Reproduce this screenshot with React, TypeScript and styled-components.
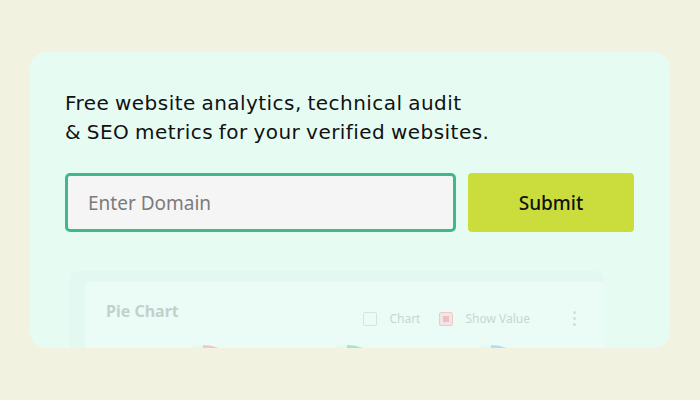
import React from "react";
import styled, { createGlobalStyle } from "styled-components";

const Global = createGlobalStyle`
  html, body { margin: 0; padding: 0; background: #f2f2e1; }
  body { font-family: "Noto Sans", "Liberation Sans", sans-serif; }
`;

const Page = styled.div`
  width: 700px;
  height: 400px;
  padding: 52px 30px;
  box-sizing: border-box;
`;

const Card = styled.div`
  height: 296px;
  background: #e6fcf3;
  border-radius: 16px;
  padding: 37px 36px 0 35px;
  box-sizing: border-box;
  overflow: hidden;
  display: flex;
  flex-direction: column;
`;

const Headline = styled.p`
  margin: 0;
  font-family: "DejaVu Sans", "Noto Sans", sans-serif;
  font-size: 20px;
  line-height: 29px;
  color: #111;
  letter-spacing: 0.45px;
  word-spacing: -1px;
`;

const Form = styled.div`
  display: flex;
  gap: 12px;
  margin-top: 26px;
`;

const DomainInput = styled.input`
  flex: 0 0 391px;
  height: 59px;
  box-sizing: border-box;
  border: 3px solid #3fb98c;
  border-radius: 5px;
  background: #f5f5f5;
  padding: 0 0 0 20px;
  font-family: inherit;
  font-size: 19px;
  color: #222;
  outline: none;
  &::placeholder { color: #7b7b7b; }
`;

const SubmitButton = styled.button`
  flex: 0 0 166px;
  height: 59px;
  border: none;
  border-radius: 4px;
  background: #cadd3c;
  font-family: inherit;
  font-size: 19px;
  font-weight: 500;
  color: #111;
  cursor: pointer;
`;

const ChartArea = styled.div`
  margin-top: 39px;
  margin-left: 5px;
  margin-right: 30px;
  padding: 11px 0 0 15px;
  background: #e3f8f1;
  border-radius: 8px 8px 0 0;
  flex: 1;
  display: flex;
  flex-direction: column;
`;

const ChartPanel = styled.div`
  flex: 1;
  background: #ebfcf6;
  border-radius: 4px 4px 0 0;
  padding: 18px 28px 0 21px;
  display: flex;
  flex-direction: column;
`;

const ChartHeader = styled.div`
  display: flex;
  align-items: flex-start;
`;

const ChartTitle = styled.span`
  font-size: 16px;
  line-height: 22px;
  font-weight: 700;
  color: #c2d1cc;
  flex: 1;
`;

const Toggle = styled.span`
  display: flex;
  align-items: center;
  gap: 12px;
  margin-right: 19px;
  font-size: 12px;
  line-height: 16px;
  color: #c6d6d1;
  padding-top: 11px;
`;

const Box = styled.span<{ $checked?: boolean }>`
  width: 12px;
  height: 12px;
  border: 1.5px solid ${(p) => (p.$checked ? "#edc9c9" : "#d7e3df")};
  border-radius: 2px;
  background: ${(p) => (p.$checked ? "#f4e4e6" : "transparent")};
  display: flex;
  align-items: center;
  justify-content: center;
  &::after {
    content: "";
    width: 6px;
    height: 6px;
    background: ${(p) => (p.$checked ? "#ecbfc5" : "transparent")};
  }
`;

const Kebab = styled.span`
  display: flex;
  flex-direction: column;
  gap: 3px;
  margin-left: 24px;
  padding-top: 11px;
  & > i {
    width: 3px;
    height: 3px;
    border-radius: 50%;
    background: #d2e0dc;
  }
`;

const Pies = styled.div`
  display: flex;
  justify-content: space-between;
  padding: 0 40px 0 52px;
  margin-top: 13px;
`;

const Pie = ({ color }: { color: string }) => (
  <svg width="90" height="90" viewBox="0 0 90 90">
    <circle cx="45" cy="45" r="40" fill="#e6f6f1" />
    <path d="M45 45 L45 5 A40 40 0 0 1 80 25 Z" fill={color} />
  </svg>
);

export default function App() {
  return (
    <Page>
      <Global />
      <Card>
        <Headline>
          Free website analytics, technical audit
          <br />& SEO metrics for your verified websites.
        </Headline>
        <Form>
          <DomainInput placeholder="Enter Domain" />
          <SubmitButton>Submit</SubmitButton>
        </Form>
        <ChartArea>
          <ChartPanel>
            <ChartHeader>
              <ChartTitle>Pie Chart</ChartTitle>
              <Toggle>
                <Box />
                Chart
              </Toggle>
              <Toggle>
                <Box $checked />
                Show Value
              </Toggle>
              <Kebab>
                <i />
                <i />
                <i />
              </Kebab>
            </ChartHeader>
            <Pies>
              <Pie color="#f0c8cc" />
              <Pie color="#a9e2cb" />
              <Pie color="#b4def0" />
            </Pies>
          </ChartPanel>
        </ChartArea>
      </Card>
    </Page>
  );
}
